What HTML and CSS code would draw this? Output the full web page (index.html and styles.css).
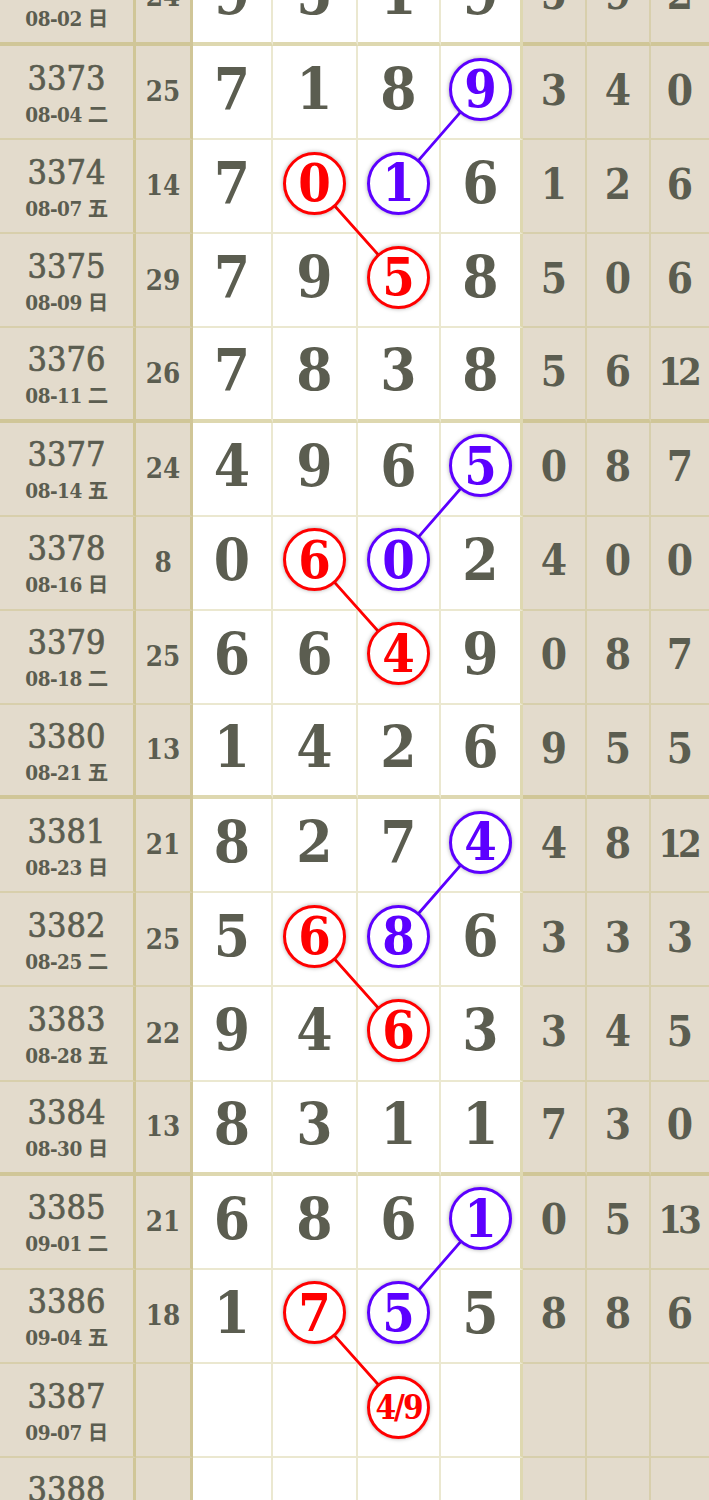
FILE: index.html
```html
<!DOCTYPE html>
<html lang="zh">
<head>
<meta charset="utf-8">
<title>走势图</title>
<link rel="stylesheet" href="styles.css">
</head>
<body>
<div class="sheet">
  <svg class="links" width="709" height="1600" viewBox="0 0 709 1600">
    <line class="lp" x1="480.5" y1="137.15" x2="398.5" y2="231.3"/>
    <line class="lr" x1="314.5" y1="231.3" x2="398.5" y2="325.45"/>
    <line class="lp" x1="480.5" y1="513.75" x2="398.5" y2="607.9"/>
    <line class="lr" x1="314.5" y1="607.9" x2="398.5" y2="702.05"/>
    <line class="lp" x1="480.5" y1="890.35" x2="398.5" y2="984.5"/>
    <line class="lr" x1="314.5" y1="984.5" x2="398.5" y2="1078.65"/>
    <line class="lp" x1="480.5" y1="1266.95" x2="398.5" y2="1361.1"/>
    <line class="lr" x1="314.5" y1="1361.1" x2="398.5" y2="1455.25"/>
  </svg>

  <div class="row end">
    <div class="c id"><div class="no">3372</div><div class="dt">08-02 日</div></div>
    <div class="c sum">24</div>
    <div class="c d">9</div><div class="c d">5</div><div class="c d">1</div><div class="c d k">9</div>
    <div class="c s">5</div><div class="c s">9</div><div class="c s last">2</div>
  </div>

  <div class="row">
    <div class="c id"><div class="no">3373</div><div class="dt">08-04 二</div></div>
    <div class="c sum">25</div>
    <div class="c d">7</div><div class="c d">1</div><div class="c d">8</div><div class="c d k"><span class="ball p">9</span></div>
    <div class="c s">3</div><div class="c s">4</div><div class="c s last">0</div>
  </div>
  <div class="row">
    <div class="c id"><div class="no">3374</div><div class="dt">08-07 五</div></div>
    <div class="c sum">14</div>
    <div class="c d">7</div><div class="c d"><span class="ball r">0</span></div><div class="c d"><span class="ball p">1</span></div><div class="c d k">6</div>
    <div class="c s">1</div><div class="c s">2</div><div class="c s last">6</div>
  </div>
  <div class="row">
    <div class="c id"><div class="no">3375</div><div class="dt">08-09 日</div></div>
    <div class="c sum">29</div>
    <div class="c d">7</div><div class="c d">9</div><div class="c d"><span class="ball r">5</span></div><div class="c d k">8</div>
    <div class="c s">5</div><div class="c s">0</div><div class="c s last">6</div>
  </div>
  <div class="row end">
    <div class="c id"><div class="no">3376</div><div class="dt">08-11 二</div></div>
    <div class="c sum">26</div>
    <div class="c d">7</div><div class="c d">8</div><div class="c d">3</div><div class="c d k">8</div>
    <div class="c s">5</div><div class="c s">6</div><div class="c s last two">12</div>
  </div>

  <div class="row">
    <div class="c id"><div class="no">3377</div><div class="dt">08-14 五</div></div>
    <div class="c sum">24</div>
    <div class="c d">4</div><div class="c d">9</div><div class="c d">6</div><div class="c d k"><span class="ball p">5</span></div>
    <div class="c s">0</div><div class="c s">8</div><div class="c s last">7</div>
  </div>
  <div class="row">
    <div class="c id"><div class="no">3378</div><div class="dt">08-16 日</div></div>
    <div class="c sum">8</div>
    <div class="c d">0</div><div class="c d"><span class="ball r">6</span></div><div class="c d"><span class="ball p">0</span></div><div class="c d k">2</div>
    <div class="c s">4</div><div class="c s">0</div><div class="c s last">0</div>
  </div>
  <div class="row">
    <div class="c id"><div class="no">3379</div><div class="dt">08-18 二</div></div>
    <div class="c sum">25</div>
    <div class="c d">6</div><div class="c d">6</div><div class="c d"><span class="ball r">4</span></div><div class="c d k">9</div>
    <div class="c s">0</div><div class="c s">8</div><div class="c s last">7</div>
  </div>
  <div class="row end">
    <div class="c id"><div class="no">3380</div><div class="dt">08-21 五</div></div>
    <div class="c sum">13</div>
    <div class="c d">1</div><div class="c d">4</div><div class="c d">2</div><div class="c d k">6</div>
    <div class="c s">9</div><div class="c s">5</div><div class="c s last">5</div>
  </div>

  <div class="row">
    <div class="c id"><div class="no">3381</div><div class="dt">08-23 日</div></div>
    <div class="c sum">21</div>
    <div class="c d">8</div><div class="c d">2</div><div class="c d">7</div><div class="c d k"><span class="ball p">4</span></div>
    <div class="c s">4</div><div class="c s">8</div><div class="c s last two">12</div>
  </div>
  <div class="row">
    <div class="c id"><div class="no">3382</div><div class="dt">08-25 二</div></div>
    <div class="c sum">25</div>
    <div class="c d">5</div><div class="c d"><span class="ball r">6</span></div><div class="c d"><span class="ball p">8</span></div><div class="c d k">6</div>
    <div class="c s">3</div><div class="c s">3</div><div class="c s last">3</div>
  </div>
  <div class="row">
    <div class="c id"><div class="no">3383</div><div class="dt">08-28 五</div></div>
    <div class="c sum">22</div>
    <div class="c d">9</div><div class="c d">4</div><div class="c d"><span class="ball r">6</span></div><div class="c d k">3</div>
    <div class="c s">3</div><div class="c s">4</div><div class="c s last">5</div>
  </div>
  <div class="row end">
    <div class="c id"><div class="no">3384</div><div class="dt">08-30 日</div></div>
    <div class="c sum">13</div>
    <div class="c d">8</div><div class="c d">3</div><div class="c d">1</div><div class="c d k">1</div>
    <div class="c s">7</div><div class="c s">3</div><div class="c s last">0</div>
  </div>

  <div class="row">
    <div class="c id"><div class="no">3385</div><div class="dt">09-01 二</div></div>
    <div class="c sum">21</div>
    <div class="c d">6</div><div class="c d">8</div><div class="c d">6</div><div class="c d k"><span class="ball p">1</span></div>
    <div class="c s">0</div><div class="c s">5</div><div class="c s last two">13</div>
  </div>
  <div class="row">
    <div class="c id"><div class="no">3386</div><div class="dt">09-04 五</div></div>
    <div class="c sum">18</div>
    <div class="c d">1</div><div class="c d"><span class="ball r">7</span></div><div class="c d"><span class="ball p">5</span></div><div class="c d k">5</div>
    <div class="c s">8</div><div class="c s">8</div><div class="c s last">6</div>
  </div>
  <div class="row">
    <div class="c id"><div class="no">3387</div><div class="dt">09-07 日</div></div>
    <div class="c sum"></div>
    <div class="c d"></div><div class="c d"></div><div class="c d"><span class="ball r small">4/9</span></div><div class="c d k"></div>
    <div class="c s"></div><div class="c s"></div><div class="c s last"></div>
  </div>
  <div class="row end">
    <div class="c id"><div class="no">3388</div><div class="dt">09-09 二</div></div>
    <div class="c sum"></div>
    <div class="c d"></div><div class="c d"></div><div class="c d"></div><div class="c d k"></div>
    <div class="c s"></div><div class="c s"></div><div class="c s last"></div>
  </div>
</div>
</body>
</html>
```

FILE: styles.css
```css
html, body {
  margin: 0;
  padding: 0;
  background: #ffffff;
}

body {
  font-family: "DejaVu Serif", "Noto Sans CJK SC", serif;
  font-stretch: condensed;
  color: #5b5d50;
  overflow: hidden;
}

.sheet {
  position: relative;
  width: 709px;
  margin-top: -48.15px;
}

.links {
  position: absolute;
  left: 0;
  top: 0;
  z-index: 1;
  pointer-events: none;
}

.links line {
  stroke-width: 2.8;
  stroke-linecap: round;
}

.links .lp { stroke: #5c00ff; }
.links .lr { stroke: #ff0000; }

.row {
  display: grid;
  grid-template-columns: 136px 57px 80px 85px 83px 82px 64px 64px 1fr;
  height: 94.15px;
}

.c {
  box-sizing: border-box;
  display: flex;
  align-items: center;
  justify-content: center;
  border-right: 2px solid rgba(190, 178, 100, 0.3);
  border-bottom: 2px solid rgba(190, 178, 100, 0.3);
  font-weight: bold;
  line-height: 1;
}

.row.end .c {
  border-bottom: 4px solid rgba(190, 178, 100, 0.5);
}

.id, .sum, .s {
  background: #e3dbcc;
}

.d {
  background: #ffffff;
  font-size: 58px;
  padding-bottom: 6px;
}

.id, .sum, .k {
  border-right: 3px solid rgba(190, 178, 100, 0.5);
}

.s.last {
  border-right: none;
}

.id {
  flex-direction: column;
  padding-top: 5px;
}

.no {
  font-size: 34px;
  font-weight: normal;
  line-height: 40px;
  -webkit-text-stroke: 0.7px currentColor;
}

.dt {
  font-size: 20.5px;
  line-height: 34px;
  letter-spacing: -0.5px;
}

.sum {
  font-size: 27.5px;
}

.s {
  font-size: 42px;
  padding-bottom: 3px;
}

.s.two {
  letter-spacing: -4px;
  font-size: 38px;
  padding-right: 4px;
}

.ball {
  position: relative;
  z-index: 2;
  box-sizing: border-box;
  width: 63px;
  height: 63px;
  border-radius: 50%;
  border: 3px solid currentColor;
  background: #ffffff;
  display: flex;
  align-items: center;
  justify-content: center;
  font-size: 52px;
  line-height: 1;
  box-shadow: 0 0 4px rgba(0, 0, 0, 0.35);
}

.ball.p { color: #5c00ff; }
.ball.r { color: #ff0000; }

.ball.small {
  font-size: 33px;
  letter-spacing: -2px;
}
```
